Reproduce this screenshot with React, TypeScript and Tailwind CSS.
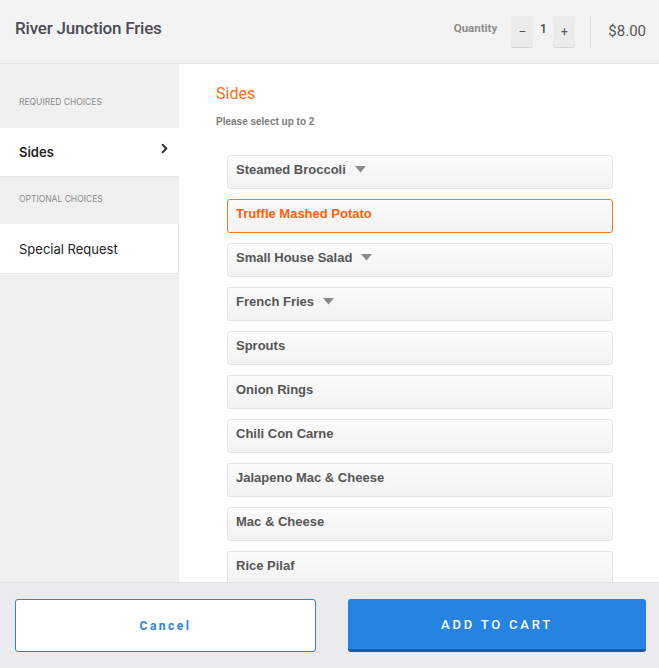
import { ChevronRight } from "lucide-react";

const options = [
  { name: "Steamed Broccoli", caret: true },
  { name: "Truffle Mashed Potato", selected: true },
  { name: "Small House Salad", caret: true },
  { name: "French Fries", caret: true },
  { name: "Sprouts" },
  { name: "Onion Rings" },
  { name: "Chili Con Carne" },
  { name: "Jalapeno Mac & Cheese" },
  { name: "Mac & Cheese" },
  { name: "Rice Pilaf" },
];

function Caret() {
  return (
    <svg width="11" height="7" viewBox="0 0 11 7" className="ml-[9px]">
      <path d="M0 0h11L5.5 6.5z" fill="#8a8a8a" />
    </svg>
  );
}

export default function App() {
  return (
    <div className="h-screen flex flex-col bg-white" style={{ fontFamily: "Roboto, sans-serif" }}>
      {/* Header */}
      <header className="h-[64px] shrink-0 bg-[#f3f3f3] border-b border-[#e2e2e2] flex items-center pl-[15px] pr-[13px] pb-[5px]">
        <h1 className="text-[17px] font-medium text-[#4b4b57] tracking-[-0.2px]">River Junction Fries</h1>
        <div className="ml-auto flex items-center h-full">
          <span className="text-[11.5px] font-bold text-[#8d8d8d] mr-[14px]">Quantity</span>
          <button className="w-[22px] h-[31px] bg-[#ebebeb] shadow-[0_1px_0_#d6d6d6] rounded-[2px] text-[12px] text-[#555] mt-[5px]">–</button>
          <span className="w-[20px] text-center text-[12px] font-medium text-[#444]">1</span>
          <button className="w-[22px] h-[31px] bg-[#ebebeb] shadow-[0_1px_0_#d6d6d6] rounded-[2px] text-[12px] text-[#555] mt-[5px]">+</button>
          <div className="w-px h-[32px] bg-[#dedede] ml-[15px] mr-[17px] mt-[5px]" />
          <span className="text-[15px] text-[#555] mt-[5px]">$8.00</span>
        </div>
      </header>

      {/* Body */}
      <div className="flex-1 flex min-h-0">
        <aside className="w-[179px] shrink-0 bg-[#f0f0f0]" style={{ fontFamily: "Inter, sans-serif" }}>
          <div className="h-[64px] flex items-end pb-[19px] pl-[19px] text-[8.5px] text-[#8a8a8a] uppercase">Required Choices</div>
          <div className="h-[49px] bg-white border-b border-[#e6e6e6] flex items-center pl-[19px] pr-[7px] pt-[2px]">
            <span className="text-[13px] font-semibold text-[#222]">Sides</span>
            <ChevronRight size={15} strokeWidth={3.2} className="ml-auto mt-[-9px] text-[#333]" />
          </div>
          <div className="h-[47px] flex items-center pl-[19px] pb-[2px] text-[8.5px] text-[#8a8a8a] uppercase">Optional Choices</div>
          <div className="h-[50px] bg-white border-b border-r border-[#e3e3e3] flex items-center pl-[19px] pt-[2px]">
            <span className="text-[13px] text-[#222]">Special Request</span>
          </div>
        </aside>

        <main className="flex-1 overflow-hidden pt-[20px]">
          <h2 className="pl-[37px] text-[16px] text-[#ff6a13] leading-[20px]">Sides</h2>
          <p
            className="pl-[37px] mt-[10px] text-[10px] font-bold text-[#7a7a7a]"
            style={{ fontFamily: "'Liberation Sans', Arial, sans-serif" }}
          >
            Please select up to 2
          </p>
          <div className="ml-[48px] mr-[46px] mt-[26px] flex flex-col gap-[10px]" style={{ fontFamily: "'Liberation Sans', Arial, sans-serif" }}>
            {options.map((o) => (
              <div
                key={o.name}
                className={
                  "h-[34px] shrink-0 rounded-[3px] border flex items-start pt-[4px] pl-[8px] bg-gradient-to-b from-[#fbfbfb] to-[#f3f3f3] " +
                  (o.selected ? "border-[#f57c1f]" : "border-[#e2e2e2]")
                }
              >
                <span className={"text-[13px] font-bold " + (o.selected ? "text-[#ff6010]" : "text-[#555]")}>{o.name}</span>
                {o.caret && <div className="mt-[6px]"><Caret /></div>}
              </div>
            ))}
          </div>
        </main>
      </div>

      {/* Footer */}
      <footer className="h-[86px] shrink-0 bg-[#ebebef] border-t border-[#e3e3e8] flex items-start pt-[16px] pl-[15px] pr-[13px] gap-[32px]">
        <button className="w-[301px] h-[53px] bg-white border border-[#2a84e0] rounded-[3px] text-[12px] font-bold text-[#2a84e0] tracking-[2.5px]">
          Cancel
        </button>
        <button className="flex-1 h-[53px] bg-[#2683e2] border-b-[3px] border-[#1b5aa0] rounded-[3px] text-[13px] font-medium text-white tracking-[2.8px] pt-[2px]">
          ADD TO CART
        </button>
      </footer>
    </div>
  );
}
